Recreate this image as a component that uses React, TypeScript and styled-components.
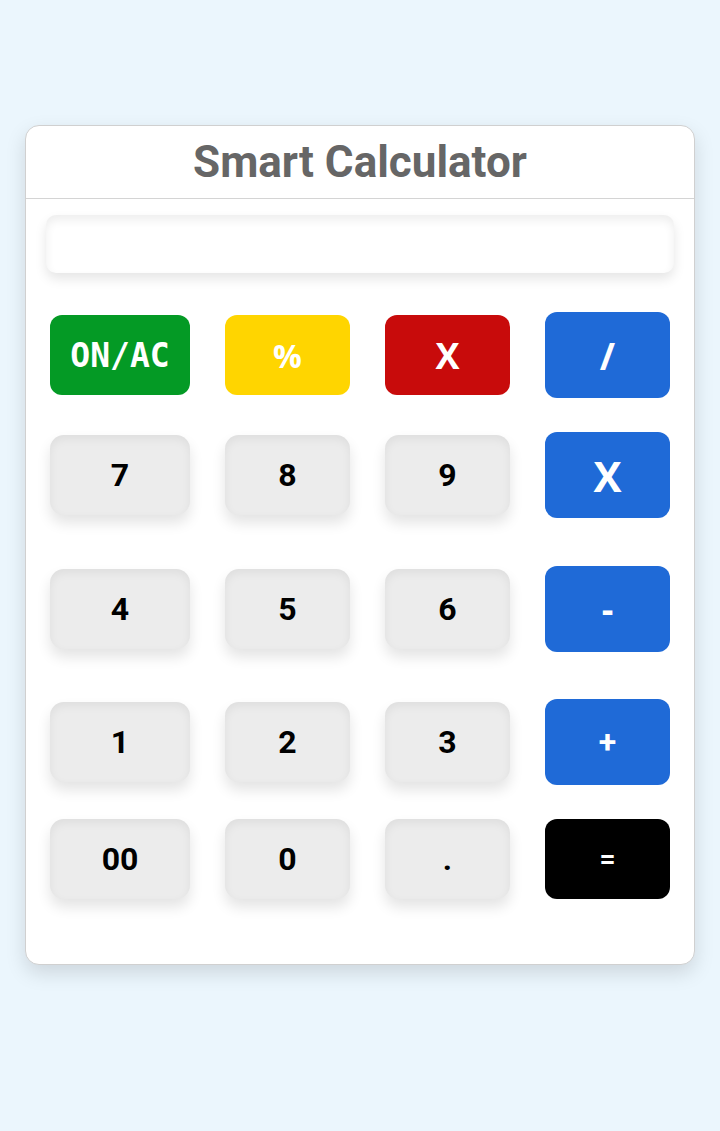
import React from 'react';
import styled, { createGlobalStyle } from 'styled-components';

const GlobalStyle = createGlobalStyle`
  html, body {
    margin: 0;
    padding: 0;
    background: #ebf6fd;
    font-family: Roboto, 'Liberation Sans', sans-serif;
  }
`;

const Page = styled.div`
  padding: 125px 25px 0 25px;
  min-height: 1131px;
  box-sizing: border-box;
`;

const Card = styled.div`
  width: 670px;
  height: 840px;
  box-sizing: border-box;
  background: #fff;
  border: 1px solid #d0d0d0;
  border-radius: 14px;
  box-shadow: 0 8px 20px rgba(0, 0, 0, 0.13);
  display: flex;
  flex-direction: column;
`;

const Title = styled.h1`
  margin: 0;
  height: 72px;
  border-bottom: 1px solid #d4d4d4;
  display: flex;
  align-items: center;
  justify-content: center;
  font-size: 44px;
  font-weight: 700;
  color: #666;
`;

const Screen = styled.div`
  margin: 16px 20px 0 20px;
  height: 58px;
  border-radius: 10px;
  background: #fff;
  box-shadow: inset 0 5px 10px rgba(0, 0, 0, 0.07), 0 6px 12px rgba(0, 0, 0, 0.1);
`;

const Keypad = styled.div`
  display: grid;
  grid-template-columns: 140px 125px 125px 125px;
  grid-template-rows: 120px 120px 147px 120px 113px;
  column-gap: 35px;
  align-items: center;
  margin: 22px 0 0 24px;
`;

type Tone = 'green' | 'yellow' | 'red' | 'blue' | 'black' | 'gray';

const tones: Record<Tone, string> = {
  green: '#049a25',
  yellow: '#ffd500',
  red: '#c80b0b',
  blue: '#1f6ad7',
  black: '#000',
  gray: '#ececec',
};

const Key = styled.button<{ $tone: Tone; $tall?: boolean; $size?: number; $mono?: boolean }>`
  width: 100%;
  height: ${(p) => (p.$tall ? 86 : 80)}px;
  border: none;
  padding: 0;
  border-radius: ${(p) => (p.$tone === 'gray' ? 14 : 12)}px;
  background: ${(p) => tones[p.$tone]};
  color: ${(p) => (p.$tone === 'gray' ? '#000' : '#fff')};
  font-family: ${(p) => (p.$mono ? "'DejaVu Sans Mono', monospace" : "Roboto, 'Liberation Sans', sans-serif")};
  font-size: ${(p) => p.$size ?? 32}px;
  font-weight: 700;
  display: flex;
  align-items: center;
  justify-content: center;
  box-shadow: ${(p) =>
    p.$tone === 'gray'
      ? 'inset 0 4px 10px rgba(0,0,0,0.06), 0 8px 14px rgba(0,0,0,0.11)'
      : 'none'};
`;

// operator glyphs use a different face than the digits
const Op = styled.span`
  font-family: 'Open Sans', 'Noto Sans', sans-serif;
  font-weight: 700;
`;

export default function App() {
  return (
    <>
      <GlobalStyle />
      <Page>
        <Card>
          <Title>Smart Calculator</Title>
          <Screen />
          <Keypad>
            <Key $tone="green" $mono $size={33}>ON/AC</Key>
            <Key $tone="yellow" $size={32}><Op>%</Op></Key>
            <Key $tone="red" $size={36}><Op>X</Op></Key>
            <Key $tone="blue" $tall $size={37}><Op>/</Op></Key>

            <Key $tone="gray">7</Key>
            <Key $tone="gray">8</Key>
            <Key $tone="gray">9</Key>
            <Key $tone="blue" $tall $size={42}><Op>X</Op></Key>

            <Key $tone="gray">4</Key>
            <Key $tone="gray">5</Key>
            <Key $tone="gray">6</Key>
            <Key $tone="blue" $tall $size={36}><Op>-</Op></Key>

            <Key $tone="gray">1</Key>
            <Key $tone="gray">2</Key>
            <Key $tone="gray">3</Key>
            <Key $tone="blue" $tall $size={32}>+</Key>

            <Key $tone="gray">00</Key>
            <Key $tone="gray">0</Key>
            <Key $tone="gray">.</Key>
            <Key $tone="black" $size={28}>=</Key>
          </Keypad>
        </Card>
      </Page>
    </>
  );
}
